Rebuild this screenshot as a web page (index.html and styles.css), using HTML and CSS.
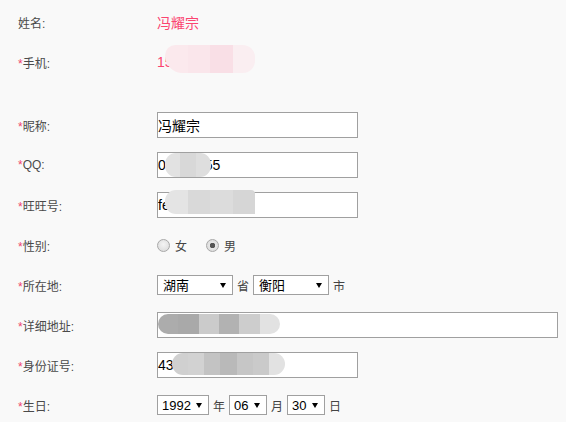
FILE: index.html
```html
<!DOCTYPE html>
<html lang="zh-CN">
<head>
  <meta charset="UTF-8" />
  <title>个人资料</title>
  <link rel="stylesheet" href="styles.css">
</head>
<body>
  <div class="profile-form">
    <div class="row">
      <span class="label">姓名:</span>
      <span class="value">冯耀宗</span>
    </div>
    <div class="row">
      <span class="label"><i>*</i>手机:</span>
      <span class="value masked">15<span class="blob blob-phone"><b></b><b></b><b></b><b></b></span></span>
    </div>
    <div class="spacer"></div>
    <div class="row">
      <span class="label"><i>*</i>昵称:</span>
      <input class="text" type="text" value="冯耀宗">
    </div>
    <div class="row">
      <span class="label"><i>*</i>QQ:</span>
      <span class="field">
        <input class="text" type="text" value="0&nbsp;&nbsp;&nbsp;&nbsp;&nbsp;&nbsp;&nbsp;&nbsp;&nbsp;&nbsp;55">
        <span class="blob blob-qq"><b></b><b></b><b></b></span>
      </span>
    </div>
    <div class="row">
      <span class="label"><i>*</i>旺旺号:</span>
      <span class="field">
        <input class="text" type="text" value="fe">
        <span class="blob blob-ww"><b></b><b></b><b></b><b></b></span>
      </span>
    </div>
    <div class="row">
      <span class="label"><i>*</i>性别:</span>
      <label class="radio"><input type="radio" name="sex">女</label>
      <label class="radio"><input type="radio" name="sex" checked>男</label>
    </div>
    <div class="row">
      <span class="label"><i>*</i>所在地:</span>
      <span class="sel w-prov"><select><option>湖南</option></select></span>
      <span class="unit">省</span>
      <span class="sel w-prov"><select><option>衡阳</option></select></span>
      <span class="unit">市</span>
    </div>
    <div class="row">
      <span class="label"><i>*</i>详细地址:</span>
      <span class="field">
        <input class="text wide" type="text" value="">
        <span class="blob blob-addr"><b></b><b></b><b></b><b></b><b></b><b></b></span>
      </span>
    </div>
    <div class="row">
      <span class="label"><i>*</i>身份证号:</span>
      <span class="field">
        <input class="text" type="text" value="43">
        <span class="blob blob-id"><b></b><b></b><b></b><b></b><b></b><b></b><b></b></span>
      </span>
    </div>
    <div class="row">
      <span class="label"><i>*</i>生日:</span>
      <span class="sel w-year"><select><option>1992</option></select></span>
      <span class="unit">年</span>
      <span class="sel w-day"><select><option>06</option></select></span>
      <span class="unit">月</span>
      <span class="sel w-day"><select><option>30</option></select></span>
      <span class="unit">日</span>
    </div>
  </div>
</body>
</html>
```

FILE: styles.css
```css
body {
  margin: 0;
  background-color: #f9f9f9;
  font-family: "Liberation Sans", "Noto Sans CJK SC", sans-serif;
  font-size: 12px;
  color: #4a4a4a;
}
.profile-form {
  padding: 2px 0 0 18px;
}
.row {
  display: flex;
  align-items: center;
  height: 40px;
}
.spacer {
  height: 23px;
}
.label {
  width: 139px;
  flex-shrink: 0;
}
.label i {
  font-style: normal;
  color: #f0456f;
}
.value {
  color: #fb4470;
  font-size: 14px;
}
.masked {
  position: relative;
}

/* inputs */
.field {
  position: relative;
  display: inline-block;
}
.text {
  box-sizing: border-box;
  width: 201px;
  height: 26px;
  margin: 0;
  padding: 0;
  border: 1px solid #a0a0a0;
  background-color: #fff;
  font-family: "Liberation Sans", "Noto Sans CJK SC", sans-serif;
  font-size: 14px;
  color: #000;
  outline: none;
}
.text.wide {
  width: 401px;
}

/* radios */
.radio {
  display: inline-flex;
  align-items: center;
  margin-right: 19px;
  color: #444;
}
.radio input {
  appearance: none;
  box-sizing: border-box;
  width: 13px;
  height: 13px;
  margin: 0 5px 0 0;
  border: 1px solid #a8a8a8;
  border-radius: 50%;
  background: radial-gradient(circle at 50% 40%, #f4f4f4, #d8d8d8);
}
.radio input:checked {
  background: radial-gradient(circle, #555 0, #555 2.5px, #e6e6e6 3px, #d6d6d6 100%);
}

/* selects */
.sel {
  position: relative;
  display: inline-block;
}
.sel select {
  appearance: none;
  box-sizing: border-box;
  height: 20px;
  margin: 0;
  padding: 0 0 0 4px;
  border: 1px solid #a0a0a0;
  border-radius: 0;
  background-color: #fff;
  font-family: "Liberation Sans", "Noto Sans CJK SC", sans-serif;
  font-size: 13px;
  color: #000;
}
.sel::after {
  content: "";
  position: absolute;
  right: 7px;
  top: 8px;
  border-left: 3px solid transparent;
  border-right: 3px solid transparent;
  border-top: 5px solid #000;
  pointer-events: none;
}
.w-prov select { width: 76px; padding-left: 5px; }
.w-year select { width: 52px; }
.w-day select { width: 38px; }
.unit {
  margin: 0 4px;
  color: #444;
}

/* mosaic blurs over private data */
.blob {
  position: absolute;
  display: flex;
  border-radius: 11px;
  overflow: hidden;
}
.blob b {
  flex: 1;
}
.blob-phone {
  left: 8px;
  top: -9px;
  width: 90px;
  height: 28px;
  border-radius: 12px 14px 14px 20px;
}
.blob-phone b:nth-child(1) { background: #fbe9ed; }
.blob-phone b:nth-child(2) { background: #fae6eb; }
.blob-phone b:nth-child(3) { background: #f9dfe6; }
.blob-phone b:nth-child(4) { background: #faeef1; }
.blob-qq {
  left: 8px;
  top: 1px;
  width: 46px;
  height: 24px;
}
.blob-qq b:nth-child(1) { background: #e2e2e2; }
.blob-qq b:nth-child(2) { background: #d8d8d8; }
.blob-qq b:nth-child(3) { background: #dedede; }
.blob-ww {
  left: 8px;
  top: -2px;
  width: 90px;
  height: 24px;
  border-radius: 11px 4px 0 11px;
}
.blob-ww b:nth-child(1) { background: #e4e4e4; }
.blob-ww b:nth-child(2) { background: #d9d9d9; }
.blob-ww b:nth-child(3) { background: #dcdcdc; }
.blob-ww b:nth-child(4) { background: #d6d6d6; }
.blob-addr {
  left: 1px;
  top: 2px;
  width: 122px;
  height: 20px;
  border-radius: 10px;
}
.blob-addr b:nth-child(1) { background: #acacac; }
.blob-addr b:nth-child(2) { background: #a9a9a9; }
.blob-addr b:nth-child(3) { background: #cbcbcb; }
.blob-addr b:nth-child(4) { background: #b2b2b2; }
.blob-addr b:nth-child(5) { background: #cdcdcd; }
.blob-addr b:nth-child(6) { background: #e2e2e2; }
.blob-id {
  left: 15px;
  top: 1px;
  width: 113px;
  height: 22px;
}
.blob-id b:nth-child(1) { background: #d0d0d0; }
.blob-id b:nth-child(2) { background: #d2d2d2; }
.blob-id b:nth-child(3) { background: #c3c3c3; }
.blob-id b:nth-child(4) { background: #b9b9b9; }
.blob-id b:nth-child(5) { background: #c6c6c6; }
.blob-id b:nth-child(6) { background: #cacaca; }
.blob-id b:nth-child(7) { background: #e2e2e2; }
```
